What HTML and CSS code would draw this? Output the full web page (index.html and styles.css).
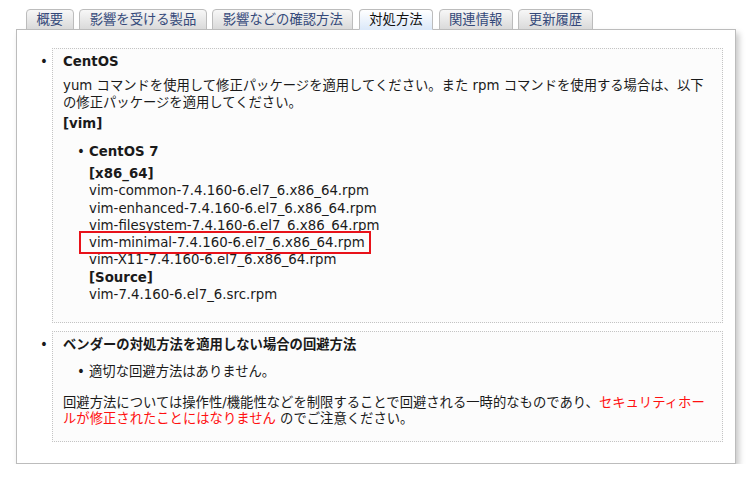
FILE: index.html
```html
<!DOCTYPE html>
<html lang="ja">
<head>
<meta charset="utf-8">
<link rel="stylesheet" href="styles.css">
</head>
<body>
<div class="page">
  <div class="tabs">
    <div class="tab">概要</div>
    <div class="tab">影響を受ける製品</div>
    <div class="tab">影響などの確認方法</div>
    <div class="tab active">対処方法</div>
    <div class="tab">関連情報</div>
    <div class="tab">更新履歴</div>
  </div>
  <div class="panel">
    <ul class="boxes">
      <li class="box box1">
        <div class="ttl">CentOS</div>
        <p class="txt">yum コマンドを使用して修正パッケージを適用してください。また rpm コマンドを使用する場合は、以下の修正パッケージを適用してください。</p>
        <p class="lbl">[vim]</p>
        <ul class="sub">
          <li>
            <div class="ttl sub-ttl">CentOS 7</div>
            <div class="pkgs">
              <div class="lbl">[x86_64]</div>
              <div>vim-common-7.4.160-6.el7_6.x86_64.rpm</div>
              <div>vim-enhanced-7.4.160-6.el7_6.x86_64.rpm</div>
              <div>vim-filesystem-7.4.160-6.el7_6.x86_64.rpm</div>
              <div><span class="mark">vim-minimal-7.4.160-6.el7_6.x86_64.rpm</span></div>
              <div>vim-X11-7.4.160-6.el7_6.x86_64.rpm</div>
              <div class="lbl">[Source]</div>
              <div>vim-7.4.160-6.el7_6.src.rpm</div>
            </div>
          </li>
        </ul>
      </li>
      <li class="box box2">
        <div class="ttl t2">ベンダーの対処方法を適用しない場合の回避方法</div>
        <ul class="sub sub2">
          <li>適切な回避方法はありません。</li>
        </ul>
        <p class="txt">回避方法については操作性/機能性などを制限することで回避される一時的なものであり、<span class="red">セキュリティホールが修正されたことにはなりません</span> のでご注意ください。</p>
      </li>
    </ul>
  </div>
</div>
</body>
</html>
```

FILE: styles.css
```css
html, body {
  margin: 0;
  padding: 0;
  background: #ffffff;
}

body {
  font-family: "DejaVu Sans", "Noto Sans CJK JP", sans-serif;
  font-size: 13.333px;
  line-height: 1.3;
  color: #1a1a1a;
}

.page {
  padding: 9px 0 0 16px;
}

.tabs {
  display: flex;
  gap: 5.5px;
  margin-left: 10px;
  margin-bottom: -1px;
  position: relative;
  z-index: 1;
}

.tab {
  height: 19px;
  line-height: 19px;
  padding: 0 9.5px;
  border: 1px solid #bcbcbc;
  border-radius: 4px 4px 0 0;
  background: linear-gradient(#f7f7f7, #dadada);
  color: #34497a;
  white-space: nowrap;
}

.tab.active {
  background: linear-gradient(#ffffff, #dce9f9);
  border-bottom-color: #dce9f9;
  color: #111111;
}

.panel {
  width: 720px;
  box-sizing: border-box;
  border: 1px solid #bcbcbc;
  background: #ffffff;
  padding: 18px 12px 21px 0;
  box-shadow: 3px 4px 6px rgba(0, 0, 0, 0.22);
}

.boxes {
  margin: 0;
  padding: 0 0 0 35px;
  list-style: disc;
}

.boxes li::marker {
  content: "\2022\0020";
}

.box {
  border: 1px dotted #c4c4c4;
  background: #fcfcfc;
  padding: 4px 10px 19px 10px;
}

.box + .box {
  margin-top: 8px;
}

.box2 {
  padding-bottom: 10px;
}

.ttl {
  font-weight: bold;
  margin-bottom: 8px;
}

.t2 {
  margin-bottom: 10px;
}

.txt {
  margin: 0 0 3px;
  line-height: 1.25;
}

.lbl {
  font-weight: bold;
  margin: 0 0 11px;
}

.pkgs .lbl {
  margin: 0;
}

.sub {
  margin: 0;
  padding: 0 0 0 26px;
  list-style: disc;
}

.sub-ttl {
  margin-bottom: 5px;
}

.pkgs {
  line-height: 17.24px;
}

.sub2 {
  margin-bottom: 14px;
}

.mark {
  position: relative;
}

.mark::after {
  content: "";
  position: absolute;
  left: -10px;
  right: -6px;
  top: -4px;
  bottom: -4px;
  border: 2px solid #e8121a;
}

.red {
  color: #ff1010;
}
```
